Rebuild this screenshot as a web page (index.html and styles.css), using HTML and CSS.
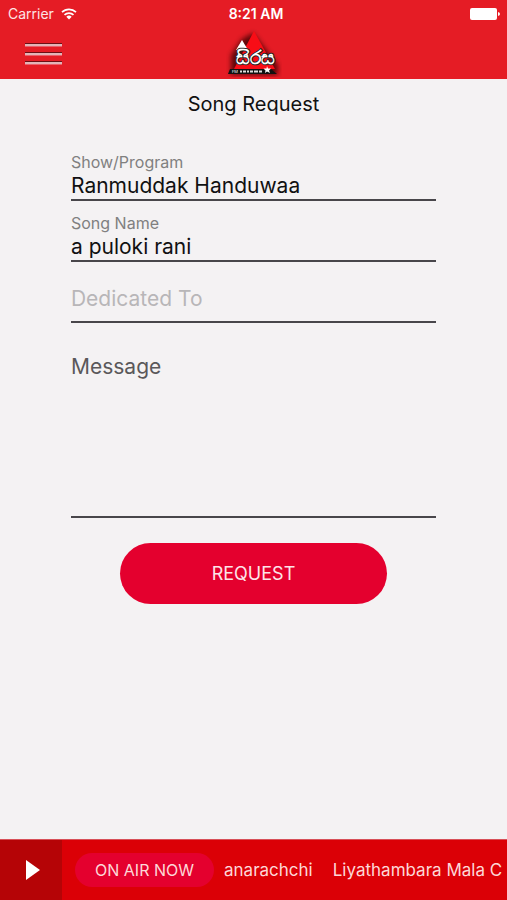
FILE: index.html
```html
<!DOCTYPE html>
<html lang="en">
<head>
    <meta charset="UTF-8">
    <meta name="viewport" content="width=device-width, initial-scale=1">
    <title>Song Request</title>
    <link rel="stylesheet" href="styles.css">
</head>
<body>
<header class="header">
    <div class="status">
        <div class="carrier">
            <span>Carrier</span>
            <svg class="wifi" viewBox="0 0 16 12" aria-hidden="true">
                <path d="M1 4.2a10 10 0 0 1 14 0M3.5 6.9a6.4 6.4 0 0 1 9 0" fill="none" stroke="#fff" stroke-width="1.7"/>
                <path d="M5.3 8.8a3.9 3.9 0 0 1 5.4 0L8 11.6z" fill="#fff"/>
            </svg>
        </div>
        <div class="time">8:21 AM</div>
        <svg class="battery" viewBox="0 0 30 12" aria-hidden="true">
            <rect x="0" y="0" width="27" height="12" rx="2" fill="#fff"/>
            <path d="M28 4q2 .4 2 2t-2 2z" fill="#fff"/>
        </svg>
    </div>
    <div class="nav">
        <button class="menu" type="button" aria-label="Menu">
            <span></span>
            <span></span>
            <span></span>
        </button>
        <svg class="logo" viewBox="0 0 56 50" role="img" aria-label="සිරස">
            <defs>
                <filter id="shade" x="-30%" y="-30%" width="160%" height="160%">
                    <feGaussianBlur stdDeviation="2.5"/>
                </filter>
            </defs>
            <path d="M27 6L52 38V48H5V28L16 12z" fill="#300" opacity=".75" filter="url(#shade)"/>
            <path d="M28 4L49 42H8z" fill="#f80d16"/>
            <path d="M16 13l6 10H10z" fill="#fff"/>
            <text class="logo-name" x="29" y="37" text-anchor="middle">සිරස</text>
            <path d="M4 42h41l6 5H2z" fill="#111"/>
            <text class="logo-tag" x="6" y="46">FM</text>
            <path d="M14 44.5h2m1 0h3m1 0h2m1 0h3m1 0h4m1 0h3" stroke="#ddd" stroke-width="2"/>
            <path d="M41 39l1 2.500h3l-2 2 1 2.500-3-1.500-2 1.500.5-2.500-2-2h3z" fill="#fff"/>
        </svg>
    </div>
</header>

<main class="main">
    <h1 class="title">Song Request</h1>
    <form class="form">
        <div class="field">
            <label for="show">Show/Program</label>
            <input type="text" id="show" value="Ranmuddak Handuwaa">
        </div>
        <div class="field">
            <label for="song">Song Name</label>
            <input type="text" id="song" value="a puloki rani">
        </div>
        <div class="field field-empty">
            <input type="text" id="dedicated" placeholder="Dedicated To" aria-label="Dedicated To">
        </div>
        <div class="field field-message">
            <textarea id="message" placeholder="Message" aria-label="Message"></textarea>
        </div>
        <button class="request" type="submit">REQUEST</button>
    </form>
</main>

<footer class="player">
    <button class="play" type="button" aria-label="Play">
        <svg viewBox="0 0 14 20" aria-hidden="true"><path d="M0 0l14 10L0 20z" fill="#fff"/></svg>
    </button>
    <div class="on-air">ON AIR NOW</div>
    <div class="ticker">
        <span>anarachchi</span>
        <span>Liyathambara Mala C</span>
    </div>
</footer>
</body>
</html>
```

FILE: styles.css
```css
* {
    margin: 0;
    padding: 0;
    box-sizing: border-box;
}

body {
    display: flex;
    flex-direction: column;
    min-height: 100vh;
    background: #f4f2f3;
    color: #111;
    font-family: Inter, "Noto Sans", sans-serif;
}

button {
    border: 0;
    cursor: pointer;
    font-family: inherit;
}

/* header */
.header {
    background: #e51c25;
    color: #fff;
}

.status {
    display: grid;
    grid-template-columns: 1fr auto 1fr;
    align-items: center;
    height: 27px;
    padding: 0 7px 0 8px;
    font-size: 14px;
}

.carrier {
    display: flex;
    align-items: center;
    gap: 7px;
    color: #fde4e4;
}

.wifi {
    width: 16px;
    height: 12px;
}

.time {
    padding-left: 4px;
    font-weight: 600;
}

.battery {
    width: 30px;
    height: 12px;
    justify-self: end;
}

.nav {
    display: grid;
    grid-template-columns: 1fr auto 1fr;
    height: 52px;
    padding: 0 25px;
}

.menu {
    display: flex;
    flex-direction: column;
    gap: 5px;
    width: 37px;
    padding-top: 16px;
    background: none;
}

.menu span {
    height: 4px;
    border-top: 1px solid #6b1015;
    border-bottom: 1px solid #e8606a;
    background: #e3b4b8;
}

.logo {
    width: 56px;
    height: 50px;
}

.logo-name {
    fill: #fff;
    stroke: #222;
    stroke-width: 2px;
    paint-order: stroke;
    font-size: 19px;
    font-weight: 900;
}

.logo-tag {
    fill: #fff;
    font-size: 4px;
}

/* form */
.main {
    flex: 1;
}

.title {
    padding-top: 11px;
    font-size: 20px;
    font-weight: 400;
    line-height: 28px;
    text-align: center;
}

.form {
    display: flex;
    flex-direction: column;
    padding: 22px 14% 0;
}

.field {
    display: flex;
    flex-direction: column;
    padding-top: 12px;
    border-bottom: 2px solid #48464a;
}

.field label {
    color: #808080;
    font-size: 16px;
    line-height: 20px;
}

.field input,
.field textarea {
    width: 100%;
    border: 0;
    outline: 0;
    background: none;
    color: #111;
    font-family: inherit;
    font-size: 21px;
    line-height: 28px;
}

.field input {
    height: 27px;
}

.field-empty {
    padding: 23px 0 9px;
}

.field-empty input::placeholder {
    color: #b8b6b8;
}

.field-message {
    padding-top: 30px;
}

.field textarea {
    display: block;
    height: 163px;
    resize: none;
}

.field textarea::placeholder {
    color: #5a585a;
}

.request {
    align-self: center;
    width: 73%;
    height: 61px;
    margin: 25px 0;
    border-radius: 31px;
    background: #e4002e;
    color: #fde4e8;
    font-size: 18px;
}

/* player bar */
.player {
    display: flex;
    align-items: center;
    height: 61px;
    border-top: 1px solid #d85058;
    background: #db0006;
    color: #fdd8d8;
}

.play {
    display: flex;
    align-items: center;
    justify-content: center;
    width: 62px;
    height: 60px;
    padding-left: 4px;
    background: #b50406;
}

.play svg {
    width: 14px;
    height: 20px;
}

.on-air {
    width: 139px;
    margin: 0 10px 0 13px;
    border-radius: 17px;
    background: #e4002e;
    font-size: 16px;
    line-height: 34px;
    text-align: center;
}

.ticker {
    display: flex;
    flex: 1;
    gap: 20px;
    overflow: hidden;
    font-size: 17px;
    line-height: 24px;
    white-space: nowrap;
}
```
